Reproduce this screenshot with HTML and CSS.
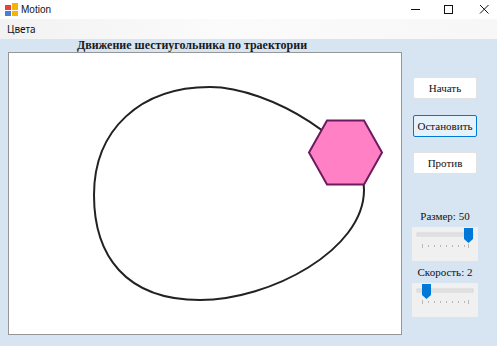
FILE: index.html
```html
<!DOCTYPE html>
<html lang="ru">
<head>
    <meta charset="UTF-8">
    <title>Motion</title>
    <link rel="stylesheet" href="styles.css">
</head>
<body>
    <div class="titlebar">
        <div class="app">
            <svg class="app-icon" width="16" height="16" viewBox="0 0 16 16">
                <rect x="1" y="3" width="6" height="5" fill="#e8413c"/>
                <rect x="8" y="1" width="6" height="7" fill="#f4b400"/>
                <rect x="1" y="9" width="6" height="5" fill="#4a7fd4"/>
                <rect x="8" y="9" width="6" height="5" fill="#f4b400"/>
            </svg>
            <span class="app-name">Motion</span>
        </div>
        <svg class="controls" width="97" height="19" viewBox="400 0 97 19">
            <line x1="411" y1="9.5" x2="420" y2="9.5" stroke="#111" stroke-width="1"/>
            <rect x="444.5" y="5.5" width="8" height="8" fill="none" stroke="#111" stroke-width="1"/>
            <path d="M480 5 L488.5 13.5 M488.5 5 L480 13.5" stroke="#111" stroke-width="1"/>
        </svg>
    </div>

    <div class="menubar">
        <span class="menu-item">Цвета</span>
    </div>

    <div class="client">
        <div class="scene">
            <div class="scene-title">Движение шестиугольника по траектории</div>
            <div class="canvas">
                <svg width="392" height="281" viewBox="9 53 392 281">
                    <path d="M210 87 C270 87 364 145 364 190 C364 250 270 300 200 300 C125 300 94 255 94 195 C94 130 140 87 210 87 Z"
                          fill="none" stroke="#222" stroke-width="2"/>
                    <polygon points="309,152.5 327,120.5 364,120.5 382,152.5 364,184.5 327,184.5"
                             fill="#ff80c4" stroke="#6e1a60" stroke-width="2"/>
                </svg>
            </div>
        </div>

        <div class="panel">
            <button class="btn">Начать</button>
            <button class="btn btn-focused">Остановить</button>
            <button class="btn">Против</button>

            <div class="slider-label">Размер: 50</div>
            <div class="trackbar">
                <svg width="66" height="34" viewBox="0 0 66 34">
                    <rect x="5" y="6" width="56" height="3" fill="#e3e3e3" stroke="#d6d6d6" stroke-width="1"/>
                    <g stroke="#b8b8b8" stroke-width="1">
                        <line x1="10.5" y1="17" x2="10.5" y2="21"/>
                        <line x1="16.5" y1="18" x2="16.5" y2="20"/>
                        <line x1="22.5" y1="18" x2="22.5" y2="20"/>
                        <line x1="28.5" y1="18" x2="28.5" y2="20"/>
                        <line x1="34.5" y1="18" x2="34.5" y2="20"/>
                        <line x1="40.5" y1="18" x2="40.5" y2="20"/>
                        <line x1="46.5" y1="18" x2="46.5" y2="20"/>
                        <line x1="52.5" y1="18" x2="52.5" y2="20"/>
                        <line x1="56.5" y1="17" x2="56.5" y2="21"/>
                    </g>
                    <path d="M52 1 H61 V12 L56.5 16 L52 12 Z" fill="#0078d7"/>
                </svg>
            </div>

            <div class="slider-label">Скорость: 2</div>
            <div class="trackbar">
                <svg width="66" height="34" viewBox="0 0 66 34">
                    <rect x="5" y="6" width="56" height="3" fill="#e3e3e3" stroke="#d6d6d6" stroke-width="1"/>
                    <g stroke="#b8b8b8" stroke-width="1">
                        <line x1="10.5" y1="17" x2="10.5" y2="21"/>
                        <line x1="16.5" y1="18" x2="16.5" y2="20"/>
                        <line x1="22.5" y1="18" x2="22.5" y2="20"/>
                        <line x1="28.5" y1="18" x2="28.5" y2="20"/>
                        <line x1="34.5" y1="18" x2="34.5" y2="20"/>
                        <line x1="40.5" y1="18" x2="40.5" y2="20"/>
                        <line x1="46.5" y1="18" x2="46.5" y2="20"/>
                        <line x1="52.5" y1="18" x2="52.5" y2="20"/>
                        <line x1="56.5" y1="17" x2="56.5" y2="21"/>
                    </g>
                    <path d="M10 1 H19 V12 L14.5 16 L10 12 Z" fill="#0078d7"/>
                </svg>
            </div>
        </div>
    </div>
</body>
</html>
```

FILE: styles.css
```css
body {
    margin: 0;
    padding: 0;
    width: 497px;
    height: 346px;
    overflow: hidden;
    background-color: #d7e4f2;
    font-family: "Liberation Serif", serif;
}

.titlebar {
    height: 19px;
    background-color: #ffffff;
    display: flex;
    justify-content: space-between;
    align-items: center;
}

.titlebar .app {
    display: flex;
    align-items: center;
    padding-left: 4px;
}

.titlebar .app-icon {
    display: block;
}

.titlebar .app-name {
    font-family: "Liberation Sans", sans-serif;
    font-size: 10px;
    color: #111;
    margin-left: 1px;
}

.titlebar .controls {
    display: block;
}

.menubar {
    height: 20px;
    background: linear-gradient(to right, #f2f2f2, #fbfbfb 45%, #f7f7f7);
    display: flex;
    align-items: center;
    font-family: "Noto Sans", sans-serif;
}

.menubar .menu-item {
    font-size: 10px;
    color: #111;
    padding-left: 7px;
}

.client {
    display: flex;
}

.scene {
    padding-left: 8px;
    width: 394px;
}

.scene-title {
    height: 13px;
    width: 368px;
    font-size: 12px;
    font-weight: bold;
    line-height: 13px;
    text-align: center;
    color: #1a1a1a;
}

.canvas {
    width: 392px;
    height: 281px;
    background-color: #ffffff;
    border: 1px solid #969696;
}

.canvas svg {
    display: block;
}

.panel {
    display: flex;
    flex-direction: column;
    align-items: center;
    margin-left: 10px;
    width: 66px;
    padding-top: 38px;
}

.btn {
    width: 64px;
    height: 22px;
    margin-bottom: 16px;
    background-color: #ffffff;
    border: 1px solid #e2e2e2;
    border-radius: 2px;
    font-family: "Liberation Serif", serif;
    font-size: 11px;
    color: #111;
    padding: 0;
}

.btn-focused {
    background-color: #e5f1fb;
    border-color: #0078d7;
    margin-bottom: 15px;
}

.slider-label {
    font-size: 11px;
    color: #111;
    height: 14px;
    line-height: 14px;
    text-align: center;
}

.panel .btn + .slider-label {
    margin-top: 19px;
}

.trackbar {
    width: 66px;
    height: 34px;
    margin-top: 4px;
    margin-bottom: 4px;
    background-color: #f0f0f0;
}

.trackbar svg {
    display: block;
}
```
